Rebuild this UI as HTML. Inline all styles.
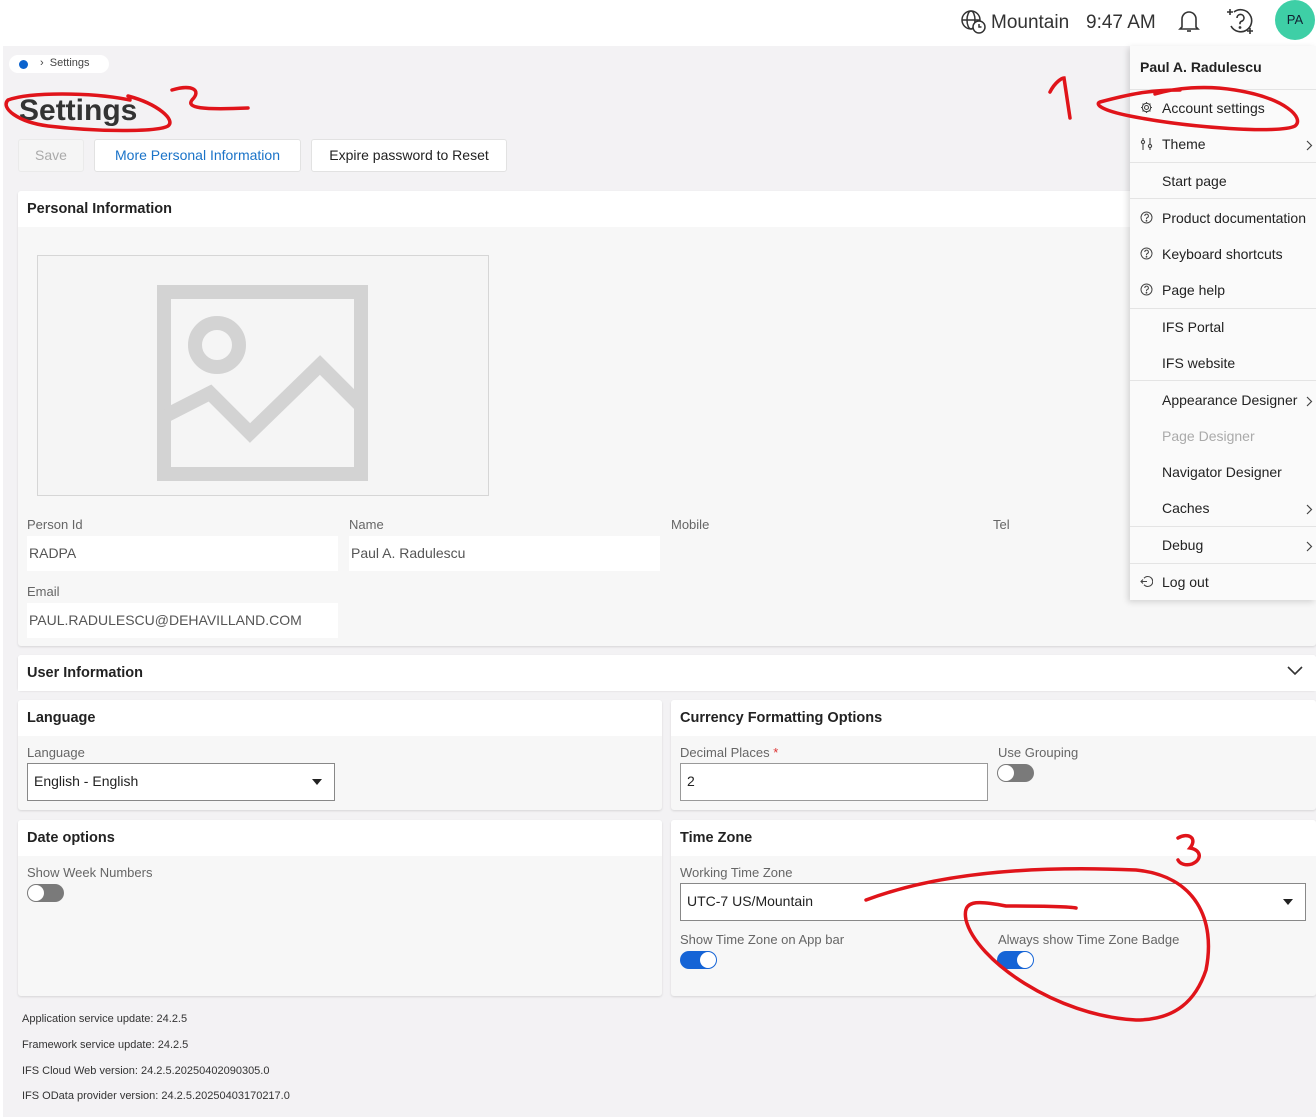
<!DOCTYPE html>
<html><head><meta charset="utf-8"><style>
*{box-sizing:border-box;margin:0;padding:0}
body{width:1316px;height:1117px;overflow:hidden;font-family:"Liberation Sans",sans-serif;background:#fff;position:relative;color:#222}
.abs{position:absolute}
#page{position:absolute;left:3px;top:46px;width:1313px;height:1071px;background:#f3f2f4}
.card{position:absolute;background:#f7f7f7;border-radius:3px;box-shadow:0 1px 2px rgba(0,0,0,.12)}
.card .hd{height:36px;background:#fff;font-weight:bold;font-size:14.5px;padding:10px 9px;color:#222;border-radius:3px 3px 0 0}
.lbl{position:absolute;font-size:13px;color:#666}
.inp{position:absolute;background:#fff;font-size:14px;color:#555;padding:9px 2px}
.btn{position:absolute;top:139px;height:33px;background:#fff;border:1px solid #e2e2e2;border-radius:3px;font-size:14px;text-align:center;line-height:31px}
.tog{position:absolute;width:37px;height:18px;border-radius:9px}
.tog i{position:absolute;top:1px;width:16px;height:16px;border-radius:50%;background:#fff}
.off{background:#7a7a7a}.off i{left:1px}
.on{background:#1564d6}.on i{right:1px}
.sel{position:absolute;background:#fff;border:1px solid #888;font-size:14px;color:#222;padding:9px 6px}
.sel:after{content:"";position:absolute;right:12px;top:15px;border:5px solid transparent;border-top:6px solid #222}
#menu{position:absolute;left:1130px;top:46px;width:186px;height:554px;background:#fafafa;box-shadow:-2px 2px 6px rgba(0,0,0,.15)}
.mi{position:absolute;left:32px;font-size:14px;color:#222}
.sep{position:absolute;left:0;width:186px;height:1px;background:#e4e4e4}
.ic{position:absolute;left:10px}
.ch{position:absolute;right:3px}
.ft{position:absolute;left:22px;font-size:11px;color:#333}
</style></head><body>
<svg class="abs" style="left:960px;top:9px" width="28" height="26" viewBox="0 0 28 26" fill="none" stroke="#333" stroke-width="1.5"><circle cx="11" cy="11" r="9"/><ellipse cx="11" cy="11" rx="4" ry="9"/><path d="M2 11h18"/><circle cx="19" cy="18" r="6" fill="#fff"/><path d="M19 15v3h2.5"/></svg>
<div class="abs" style="left:991px;top:12px;font-size:19px;color:#333">Mountain</div>
<div class="abs" style="left:1086px;top:12px;font-size:19px;color:#333">9:47 AM</div>
<svg class="abs" style="left:1177px;top:8px" width="24" height="26" viewBox="0 0 24 26" fill="none" stroke="#333" stroke-width="1.6"><path d="M5 19V11a7 7 0 0 1 14 0v8l2 2H3z"/><path d="M10 23h4"/></svg>
<svg class="abs" style="left:1226px;top:7px" width="30" height="28" viewBox="0 0 30 28" fill="none" stroke="#333" stroke-width="1.6"><path d="M8 5a11 11 0 1 1 -3 14"/><path d="M11 11a3.5 3.5 0 1 1 4.5 3.3c-1 .4-1.5 1-1.5 2v1"/><circle cx="14" cy="20.5" r=".6" fill="#333"/><path d="M4 2v6M1 5h6M24 21v6M21 24h6"/></svg>
<div class="abs" style="left:1275px;top:0;width:40px;height:40px;border-radius:50%;background:#3ecfa6;color:#123;font-size:13px;text-align:center;line-height:40px">PA</div>

<div id="page"></div>
<div class="abs" style="left:9px;top:55px;width:100px;height:18px;background:#fff;border-radius:9px"></div>
<div class="abs" style="left:19px;top:60px;width:9px;height:9px;border-radius:50%;background:#0b63ce"></div>
<div class="abs" style="left:40px;top:57px;font-size:11px;color:#444">›&nbsp;&nbsp;Settings</div>
<div class="abs" style="left:19px;top:94px;font-size:30px;font-weight:bold;color:#333">Settings</div>
<div class="btn" style="left:18px;width:66px;background:#f5f5f5;color:#aaa;border-color:#eaeaea">Save</div>
<div class="btn" style="left:94px;width:207px;color:#1a73c8">More Personal Information</div>
<div class="btn" style="left:311px;width:196px;color:#222">Expire password to Reset</div>

<div class="card" style="left:18px;top:191px;width:1298px;height:455px"><div class="hd">Personal Information</div></div>
<div class="abs" style="left:37px;top:255px;width:452px;height:241px;border:1px solid #d6d6d6;background:#f5f5f5"></div>
<svg class="abs" style="left:157px;top:285px" width="211" height="196" viewBox="0 0 211 196" fill="none" stroke="#d3d3d3" stroke-width="14"><rect x="7" y="7" width="197" height="182"/><circle cx="60" cy="60" r="22"/><path d="M10 130l43-22 40 40 70-68 45 45"/></svg>
<div class="lbl" style="left:27px;top:517px">Person Id</div>
<div class="lbl" style="left:349px;top:517px">Name</div>
<div class="lbl" style="left:671px;top:517px">Mobile</div>
<div class="lbl" style="left:993px;top:517px">Tel</div>
<div class="inp" style="left:27px;top:536px;width:311px;height:35px">RADPA</div>
<div class="inp" style="left:349px;top:536px;width:311px;height:35px">Paul A. Radulescu</div>
<div class="lbl" style="left:27px;top:584px">Email</div>
<div class="inp" style="left:27px;top:603px;width:311px;height:35px">PAUL.RADULESCU@DEHAVILLAND.COM</div>

<div class="card" style="left:18px;top:655px;width:1298px;height:35px;background:#fff"><div class="hd">User Information</div></div>
<svg class="abs" style="left:1286px;top:665px" width="18" height="12" viewBox="0 0 18 12" fill="none" stroke="#333" stroke-width="1.6"><path d="M2 2l7 7 7-7"/></svg>

<div class="card" style="left:18px;top:700px;width:644px;height:110px"><div class="hd">Language</div></div>
<div class="lbl" style="left:27px;top:745px">Language</div>
<div class="sel" style="left:27px;top:763px;width:308px;height:38px">English - English</div>
<div class="card" style="left:671px;top:700px;width:645px;height:110px"><div class="hd">Currency Formatting Options</div></div>
<div class="lbl" style="left:680px;top:745px">Decimal Places <span style="color:#d33">*</span></div>
<div class="inp" style="left:680px;top:763px;width:308px;height:38px;border:1px solid #999;color:#222;padding:9px 6px">2</div>
<div class="lbl" style="left:998px;top:745px">Use Grouping</div>
<div class="tog off" style="left:997px;top:764px"><i></i></div>

<div class="card" style="left:18px;top:820px;width:644px;height:176px"><div class="hd">Date options</div></div>
<div class="lbl" style="left:27px;top:865px">Show Week Numbers</div>
<div class="tog off" style="left:27px;top:884px"><i></i></div>
<div class="card" style="left:671px;top:820px;width:645px;height:176px"><div class="hd">Time Zone</div></div>
<div class="lbl" style="left:680px;top:865px">Working Time Zone</div>
<div class="sel" style="left:680px;top:883px;width:626px;height:38px">UTC-7 US/Mountain</div>
<div class="lbl" style="left:680px;top:932px">Show Time Zone on App bar</div>
<div class="tog on" style="left:680px;top:951px"><i></i></div>
<div class="lbl" style="left:998px;top:932px">Always show Time Zone Badge</div>
<div class="tog on" style="left:997px;top:951px"><i></i></div>

<div class="ft" style="top:1013px">Application service update: 24.2.5</div>
<div class="ft" style="top:1039px">Framework service update: 24.2.5</div>
<div class="ft" style="top:1065px">IFS Cloud Web version: 24.2.5.20250402090305.0</div>
<div class="ft" style="top:1090px">IFS OData provider version: 24.2.5.20250403170217.0</div>

<div id="menu">
<div class="mi" style="left:10px;top:13px;font-weight:bold">Paul A. Radulescu</div>
<div class="sep" style="top:43px"></div>
<svg class="ic" style="top:55px" width="13" height="13" viewBox="0 0 13 13" fill="none" stroke="#444" stroke-width="1.1"><circle cx="6.5" cy="6.5" r="2"/><path d="M6.5 1v1.5M6.5 10.5V12M1 6.5h1.5M10.5 6.5H12M2.6 2.6l1.1 1.1M9.3 9.3l1.1 1.1M2.6 10.4l1.1-1.1M9.3 3.7l1.1-1.1"/><circle cx="6.5" cy="6.5" r="4.2"/></svg>
<div class="mi" style="top:54px">Account settings</div>
<svg class="ic" style="top:91px" width="13" height="14" viewBox="0 0 13 14" fill="none" stroke="#444" stroke-width="1.1"><path d="M3 1v12M10 1v12"/><circle cx="3" cy="5" r="1.6" fill="#fafafa"/><circle cx="10" cy="9" r="1.6" fill="#fafafa"/></svg>
<div class="mi" style="top:90px">Theme</div>
<svg class="ch" style="top:94px" width="7" height="11" viewBox="0 0 7 11" fill="none" stroke="#444" stroke-width="1.2"><path d="M1 1l4.5 4.5L1 10"/></svg>
<div class="sep" style="top:116px"></div>
<div class="mi" style="top:127px">Start page</div>
<div class="sep" style="top:152px"></div>
<svg class="ic" style="top:165px" width="13" height="13" viewBox="0 0 13 13" fill="none" stroke="#444" stroke-width="1"><circle cx="6.5" cy="6.5" r="5.5"/><path d="M4.8 5a1.8 1.8 0 1 1 2.4 1.6c-.5.2-.7.5-.7 1v.6"/><circle cx="6.5" cy="9.8" r=".4" fill="#444"/></svg>
<div class="mi" style="top:164px">Product documentation</div>
<svg class="ic" style="top:201px" width="13" height="13" viewBox="0 0 13 13" fill="none" stroke="#444" stroke-width="1"><circle cx="6.5" cy="6.5" r="5.5"/><path d="M4.8 5a1.8 1.8 0 1 1 2.4 1.6c-.5.2-.7.5-.7 1v.6"/><circle cx="6.5" cy="9.8" r=".4" fill="#444"/></svg>
<div class="mi" style="top:200px">Keyboard shortcuts</div>
<svg class="ic" style="top:237px" width="13" height="13" viewBox="0 0 13 13" fill="none" stroke="#444" stroke-width="1"><circle cx="6.5" cy="6.5" r="5.5"/><path d="M4.8 5a1.8 1.8 0 1 1 2.4 1.6c-.5.2-.7.5-.7 1v.6"/><circle cx="6.5" cy="9.8" r=".4" fill="#444"/></svg>
<div class="mi" style="top:236px">Page help</div>
<div class="sep" style="top:262px"></div>
<div class="mi" style="top:273px">IFS Portal</div>
<div class="mi" style="top:309px">IFS website</div>
<div class="sep" style="top:334px"></div>
<div class="mi" style="top:346px">Appearance Designer</div>
<svg class="ch" style="top:350px" width="7" height="11" viewBox="0 0 7 11" fill="none" stroke="#444" stroke-width="1.2"><path d="M1 1l4.5 4.5L1 10"/></svg>
<div class="mi" style="top:382px;color:#aaa">Page Designer</div>
<div class="mi" style="top:418px">Navigator Designer</div>
<div class="mi" style="top:454px">Caches</div>
<svg class="ch" style="top:458px" width="7" height="11" viewBox="0 0 7 11" fill="none" stroke="#444" stroke-width="1.2"><path d="M1 1l4.5 4.5L1 10"/></svg>
<div class="sep" style="top:480px"></div>
<div class="mi" style="top:491px">Debug</div>
<svg class="ch" style="top:495px" width="7" height="11" viewBox="0 0 7 11" fill="none" stroke="#444" stroke-width="1.2"><path d="M1 1l4.5 4.5L1 10"/></svg>
<div class="sep" style="top:517px"></div>
<svg class="ic" style="top:529px" width="13" height="13" viewBox="0 0 13 13" fill="none" stroke="#444" stroke-width="1.1"><path d="M4 3.2A5 5 0 1 1 4 9.8"/><path d="M1 6.5h6M3 4.5L1 6.5l2 2"/></svg>
<div class="mi" style="top:528px">Log out</div>
</div>

<svg class="abs" style="left:0;top:0" width="1316" height="1117" fill="none" stroke="#e0141a" stroke-width="3.5" stroke-linecap="round">
<path d="M130 100C90 92 30 92 8 100c-8 8 10 22 40 26 50 6 110 6 120 0 8-6-10-22-40-30"/>
<path d="M172 90c20-6 30 0 20 10-6 8 10 10 56 8"/>
<path d="M1050 92c5-10 12-14 14-14l6 40"/>
<path d="M1180 90c-30 0-50 4-80 12-5 2 0 8 30 14 60 12 150 18 165 10 10-8-10-28-60-36-30-5-60-2-80 4"/>
<path d="M1178 838c10-6 20 0 12 10 12 2 12 12 2 16-6 2-12 0-14-4"/>
<path d="M866 900c80-30 180-34 270-30 60 6 80 50 70 100-10 30-30 50-70 50-80-4-160-60-170-100-4-20 10-20 40-14 20 0 60 0 70 2"/>
</svg>
</body></html>
